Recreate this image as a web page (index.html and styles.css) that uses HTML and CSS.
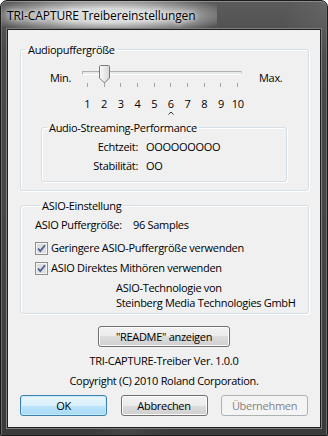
FILE: index.html
```html
<!DOCTYPE html>
<html lang="de">
<head>
    <meta charset="UTF-8">
    <title>TRI-CAPTURE Treibereinstellungen</title>
    <link rel="stylesheet" href="styles.css">
</head>
<body>
    <div class="window">
        <div class="titlebar"><span class="title-text">TRI-CAPTURE Treibereinstellungen</span></div>

        <div class="client">
            <!-- Buffer size slider -->
            <fieldset class="group group-buffer">
                <legend>Audiopuffergröße</legend>

                <div class="slider-row">
                    <span class="slider-label">Min.</span>
                    <div class="slider">
                        <div class="track"></div>
                        <svg class="thumb" width="11" height="19" viewBox="0 0 11 19">
                            <defs>
                                <linearGradient id="thumb-fill" x1="0" x2="1" y1="0" y2="0">
                                    <stop offset="0" stop-color="#fbfbfb"/>
                                    <stop offset="1" stop-color="#d6d6d6"/>
                                </linearGradient>
                            </defs>
                            <path d="M1.5 .5 H9.5 A1 1 0 0 1 10.5 1.5 V13 L5.5 18 L.5 13 V1.5 A1 1 0 0 1 1.5 .5 Z" fill="url(#thumb-fill)" stroke="#7a7a7a"/>
                        </svg>
                        <div class="ticks">
                            <span></span><span></span><span></span><span></span><span></span>
                            <span></span><span></span><span></span><span></span><span></span>
                        </div>
                    </div>
                    <span class="slider-label slider-max">Max.</span>
                </div>

                <div class="scale">
                    <span>1</span><span>2</span><span>3</span><span>4</span><span>5</span>
                    <span>6</span><span>7</span><span>8</span><span>9</span><span>10</span>
                </div>
                <div class="scale marker-row">
                    <svg class="marker" width="6" height="4" viewBox="0 0 6 4">
                        <polyline points="0.5,3.5 3,1 5.5,3.5" fill="none" stroke="#333" stroke-width="1"/>
                    </svg>
                </div>

                <fieldset class="group group-perf">
                    <legend>Audio-Streaming-Performance</legend>
                    <div class="perf-row">
                        <span class="perf-label">Echtzeit:</span>
                        <span>OOOOOOOOO</span>
                    </div>
                    <div class="perf-row">
                        <span class="perf-label">Stabilität:</span>
                        <span>OO</span>
                    </div>
                </fieldset>
            </fieldset>

            <!-- ASIO settings -->
            <fieldset class="group group-asio">
                <legend>ASIO-Einstellung</legend>
                <div class="asio-row">
                    <span class="asio-label">ASIO Puffergröße:</span>
                    <span>96 Samples</span>
                </div>
                <label class="check-row">
                    <svg class="checkbox" width="13" height="13" viewBox="0 0 13 13">
                        <rect x=".5" y=".5" width="12" height="12" fill="#f4f4f4" stroke="#8f8f8f"/>
                        <rect x="2" y="2" width="9" height="9" fill="#dedede"/>
                        <path d="M3 6.5 L5.3 9 L10 3.2" fill="none" stroke="#4a5f97" stroke-width="1.8"/>
                    </svg>
                    Geringere ASIO-Puffergröße verwenden
                </label>
                <label class="check-row">
                    <svg class="checkbox" width="13" height="13" viewBox="0 0 13 13">
                        <rect x=".5" y=".5" width="12" height="12" fill="#f4f4f4" stroke="#8f8f8f"/>
                        <rect x="2" y="2" width="9" height="9" fill="#dedede"/>
                        <path d="M3 6.5 L5.3 9 L10 3.2" fill="none" stroke="#4a5f97" stroke-width="1.8"/>
                    </svg>
                    ASIO Direktes Mithören verwenden
                </label>
                <p class="credit">ASIO-Technologie von<br>Steinberg Media Technologies GmbH</p>
            </fieldset>

            <button class="btn btn-readme">"README" anzeigen</button>

            <p class="info">TRI-CAPTURE-Treiber Ver. 1.0.0</p>
            <p class="info info-copy">Copyright (C) 2010 Roland Corporation.</p>

            <div class="actions">
                <button class="btn btn-default">OK</button>
                <button class="btn">Abbrechen</button>
                <button class="btn" disabled>Übernehmen</button>
            </div>
        </div>
    </div>
</body>
</html>
```

FILE: styles.css
```css
* {
    margin: 0;
    padding: 0;
    box-sizing: border-box;
}

body {
    width: 328px;
    height: 436px;
    overflow: hidden;
    background: #fff;
    font-family: 'Open Sans', 'Noto Sans', sans-serif;
    font-size: 11px;
    letter-spacing: -0.3px;
    color: #000;
}

.window {
    width: 328px;
    height: 436px;
    display: flex;
    flex-direction: column;
    padding: 0 6px 7px;
    border: 1px solid #1b1b1b;
    border-radius: 7px 7px 0 0;
    background:
        linear-gradient(115deg, rgba(255, 255, 255, 0) 55%, rgba(255, 255, 255, 0.06) 62%, rgba(255, 255, 255, 0) 70%),
        linear-gradient(to bottom, #5c5c5c, #494949 12%, #444 60%, #3a3a3a);
    box-shadow: inset 0 1px 0 #8a8a8a, inset 1px 0 0 #6c6c6c, inset -1px 0 0 #6c6c6c;
}

.titlebar {
    height: 28px;
    line-height: 29px;
    font-size: 12px;
    letter-spacing: -0.1px;
    white-space: nowrap;
}

.title-text {
    display: inline-block;
    margin-left: -6px;
    padding: 0 22px 0 6px;
    background: radial-gradient(ellipse 60% 70% at 50% 50%, rgba(235, 235, 235, 0.85) 35%, rgba(200, 200, 200, 0) 100%);
    text-shadow: 0 0 5px #fff, 0 0 8px #fff;
}

.client {
    flex: 1;
    display: flex;
    flex-direction: column;
    background: #f0f0f0;
    border: 1px solid #1f1f1f;
    box-shadow: 0 0 0 1px #7f7f7f;
}

/* Group boxes */
.group {
    border: 1px solid #d5dfe5;
    border-radius: 3px;
    box-shadow: inset 1px 1px 0 #fff, 1px 1px 0 #fff;
}

.group legend {
    margin-left: 5px;
    padding: 0 2px;
    line-height: 15px;
}

.group-buffer {
    margin: 12px 11px 0 12px;
    padding: 0 0 8px;
}

.slider-row {
    display: flex;
    align-items: flex-start;
    margin-top: 8px;
}

.slider-label {
    width: 32px;
    margin: 5px 0 0 29px;
    line-height: 16px;
}

.slider-max {
    margin-left: 17px;
}

.slider {
    position: relative;
    width: 160px;
    height: 24px;
}

.track {
    margin-top: 6px;
    height: 4px;
    background: #e7eaea;
    border: 1px solid;
    border-color: #b0b0b0 #d6d6d6 #fff #b0b0b0;
    border-radius: 1px;
}

.thumb {
    position: absolute;
    left: 17px;
    top: 0;
}

.ticks {
    display: flex;
    justify-content: space-between;
    margin-top: 8px;
    padding: 0 4px 0 5px;
}

.ticks span {
    width: 1px;
    height: 4px;
    background: #a3a3a3;
}

.scale {
    display: grid;
    grid-template-columns: repeat(10, 1fr);
    width: 167px;
    margin: 7px 0 0 58px;
    text-align: center;
    line-height: 16px;
}

.marker-row {
    height: 6px;
    margin-top: -2px;
    line-height: 0;
}

.marker {
    grid-column: 6;
    justify-self: center;
    margin-top: 1px;
}

.group-perf {
    margin: 4px 21px 0 20px;
    padding: 4px 0 7px;
}

.perf-row {
    display: flex;
    gap: 8px;
    line-height: 16px;
}

.perf-row + .perf-row {
    margin-top: 3px;
}

.perf-label {
    width: 96px;
    text-align: right;
}

/* ASIO group */
.group-asio {
    margin: 7px 11px 0 12px;
    padding: 0 0 3px 14px;
}

.asio-row {
    display: flex;
    margin-top: 4px;
    line-height: 16px;
}

.asio-label {
    width: 98px;
}

.check-row {
    display: flex;
    align-items: center;
    gap: 3px;
    margin-top: 7px;
    line-height: 16px;
}

.check-row + .check-row {
    margin-top: 4px;
}

.credit {
    margin: 4px 0 0 81px;
    line-height: 15px;
}

/* Buttons */
.btn {
    height: 21px;
    font-family: inherit;
    font-size: 11px;
    letter-spacing: inherit;
    color: #000;
    border: 1px solid #707070;
    border-radius: 3px;
    background: linear-gradient(to bottom, #f2f2f2 0, #ebebeb 50%, #dddddd 50%, #cfcfcf 100%);
    box-shadow: inset 0 0 0 1px #fcfcfc;
}

.btn-default {
    border-color: #3c7fb1;
    background: linear-gradient(to bottom, #eaf6fd 0, #d9f0fc 50%, #bee6fd 50%, #a7d9f5 100%);
    box-shadow: inset 0 0 0 1px #c6e9fd;
}

.btn:disabled {
    color: #838383;
    border-color: #adb2b5;
    background: #f4f4f4;
    box-shadow: none;
}

.btn-readme {
    align-self: center;
    width: 132px;
    margin-top: 12px;
}

.info {
    text-align: center;
    line-height: 16px;
    margin-top: 6px;
}

.info-copy {
    margin-top: 4px;
}

.actions {
    display: flex;
    justify-content: space-between;
    margin-top: 6px;
    padding: 0 12px;
}

.actions .btn {
    width: 87px;
}
```
